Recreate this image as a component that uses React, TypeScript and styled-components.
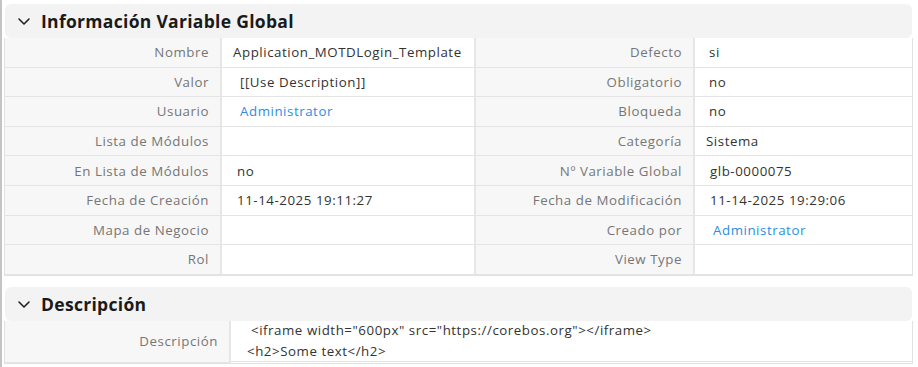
import React from "react"
import styled, { createGlobalStyle } from "styled-components"

const GlobalStyle = createGlobalStyle`
  body {
    margin: 0;
    background: #fff;
    font-family: "Open Sans", "Liberation Sans", sans-serif;
  }
`

const Page = styled.div`
  width: 918px;
  height: 367px;
  box-sizing: border-box;
  border-left: 2px solid #c4c4c4;
  padding: 4px 5px 0 2px;
  overflow: hidden;
`

const Section = styled.section`
  margin-bottom: 11px;
`

const Header = styled.div`
  height: 34px;
  margin-left: 1px;
  margin-right: 1px;
  background: #f3f3f3;
  border-radius: 6px;
  display: flex;
  align-items: center;
  padding-left: 12px;
  gap: 10px;
  font-size: 17.5px;
  letter-spacing: 0.3px;
  font-weight: 700;
  color: #1a1a1a;
`

const Grid = styled.div<{ $cols: string }>`
  display: grid;
  grid-template-columns: ${(p) => p.$cols};
  border: 1px solid #e2e2e2;
  border-top: none;
  font-size: 13.3px;
  letter-spacing: 0.55px;
`

const Label = styled.div<{ $h?: number }>`
  height: ${(p) => p.$h ?? 28.6}px;
  background: #f7f7f7;
  color: #767676;
  text-align: right;
  padding-right: 11px;
  display: flex;
  align-items: center;
  justify-content: flex-end;
  border-right: 2px solid #e6e6e6;
  border-bottom: 1px solid #e4e4e4;
`

const Value = styled.div<{ $indent?: number; $link?: boolean; $last?: boolean }>`
  height: 28.6px;
  display: flex;
  align-items: center;
  padding-left: ${(p) => p.$indent ?? 11}px;
  color: ${(p) => (p.$link ? "#2b8ee3" : "#333")};
  border-right: ${(p) => (p.$last ? "none" : "2px solid #e6e6e6")};
  border-bottom: 1px solid #e4e4e4;
`

const DescValue = styled.div`
  height: 41px;
  display: flex;
  flex-direction: column;
  justify-content: flex-start;
  gap: 5px;
  padding-left: 16px;
  padding-top: 1px;
  box-sizing: border-box;
  color: #333;
  border-bottom: 1px solid #e4e4e4;
  line-height: 16px;
`

const Chevron = () => (
  <svg width="14" height="14" viewBox="0 0 14 14">
    <path d="M2 5l5 5 5-5" fill="none" stroke="#222" strokeWidth="1.6" strokeLinecap="round" strokeLinejoin="round" />
  </svg>
)

type Cell = { text: string; indent?: number; link?: boolean }
type Row = [string, Cell, string, Cell]

const rows: Row[] = [
  ["Nombre", { text: "Application_MOTDLogin_Template" }, "Defecto", { text: "si", indent: 14 }],
  ["Valor", { text: "[[Use Description]]", indent: 18 }, "Obligatorio", { text: "no", indent: 14 }],
  ["Usuario", { text: "Administrator", indent: 18, link: true }, "Bloqueda", { text: "no", indent: 14 }],
  ["Lista de Módulos", { text: "" }, "Categoría", { text: "Sistema", indent: 11 }],
  ["En Lista de Módulos", { text: "no", indent: 15 }, "Nº Variable Global", { text: "glb-0000075", indent: 15 }],
  ["Fecha de Creación", { text: "11-14-2025 19:11:27", indent: 15 }, "Fecha de Modificación", { text: "11-14-2025 19:29:06", indent: 15 }],
  ["Mapa de Negocio", { text: "" }, "Creado por", { text: "Administrator", indent: 18, link: true }],
  ["Rol", { text: "" }, "View Type", { text: "" }],
]

export default function App() {
  return (
    <>
      <GlobalStyle />
      <Page>
        <Section>
          <Header>
            <Chevron />
            Información Variable Global
          </Header>
          <Grid $cols="217px 254px 219px 217px">
            {rows.map(([l1, v1, l2, v2]) => (
              <React.Fragment key={l1}>
                <Label>{l1}</Label>
                <Value $indent={v1.indent} $link={v1.link}>{v1.text}</Value>
                <Label>{l2}</Label>
                <Value $indent={v2.indent} $link={v2.link} $last>{v2.text}</Value>
              </React.Fragment>
            ))}
          </Grid>
        </Section>
        <Section>
          <Header>
            <Chevron />
            Descripción
          </Header>
          <Grid $cols="226px 1fr">
            <Label $h={41}>Descripción</Label>
            <DescValue>
              <span>&nbsp;&lt;iframe width="600px" src="https://corebos.org"&gt;&lt;/iframe&gt;</span>
              <span>&lt;h2&gt;Some text&lt;/h2&gt;</span>
            </DescValue>
          </Grid>
        </Section>
      </Page>
    </>
  )
}
